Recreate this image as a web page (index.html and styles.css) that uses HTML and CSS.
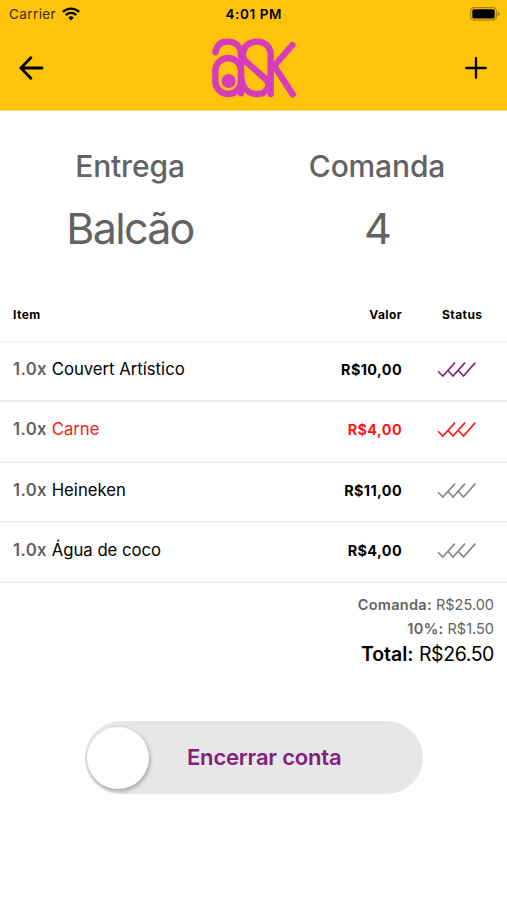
FILE: index.html
```html
<!DOCTYPE html>
<html lang="pt-BR">
<head>
<meta charset="utf-8">
<title>Comanda</title>
<link rel="stylesheet" href="styles.css">
</head>
<body>
<svg width="0" height="0" class="defs">
  <symbol id="checks" viewBox="0 0 40 17"><path d="M1 10.2 5.8 15 18 1.6M10.5 9 16 15 28 1.6M21 9 26.5 15 38.3 1.6" fill="none" stroke="currentColor" stroke-width="1.6"/></symbol>
</svg>
<header class="top">
  <div class="statusbar">
    <div class="carrier"><span>Carrier</span>
      <svg width="18" height="14" viewBox="0 0 18 14" fill="none" stroke="#000" stroke-width="2.3"><path d="M.9 4.9A11.6 11.6 0 0 1 17.1 4.9M3.8 8.1A7.4 7.4 0 0 1 14.2 8.1"/><path d="M6.3 10.7A3.8 3.8 0 0 1 11.7 10.7L9 13.5Z" fill="#000" stroke="none"/></svg>
    </div>
    <div class="clock">4:01 PM</div>
    <div class="battery">
      <svg width="30" height="14" viewBox="0 0 30 14"><rect x=".6" y=".6" width="25.8" height="12.6" rx="3.6" fill="none" stroke="#a98308" stroke-width="1.2"/><rect x="2.3" y="2.3" width="22.4" height="9.2" rx="1.5" fill="#000"/><path d="M27.7 4.6Q30 5.8 29.9 7T27.7 9.3Z" fill="#a98308"/></svg>
    </div>
  </div>
  <nav class="navbar">
    <svg class="back" width="26" height="24" viewBox="0 0 26 24" fill="none" stroke="#000" stroke-width="2.9" stroke-linecap="round" stroke-linejoin="round"><path d="M12.8 1.8 2.9 12 12.8 22.2M3.2 12H24"/></svg>
    <svg class="logo" width="84" height="60" viewBox="36 24 252 180" fill="none" stroke="#d53bbb" stroke-width="19" stroke-linecap="round">
      <path d="M46 67C51 42 65 35 82 35C107 35 123 49 123 76V190"/>
      <rect x="46" y="84" width="77" height="108" rx="38.5"/>
      <circle cx="86" cy="153" r="21" fill="#d53bbb" stroke="none"/>
      <path d="M212 192V74C212 50 195 35 171 35C143 35 127 54 129 77C130 87 135 92 141 98L197 147C215 166 200 192 172 192C145 192 127 174 125 148"/>
      <path d="M277 45 218 113M226 113 278 193"/>
    </svg>
    <svg class="add" width="22" height="22" viewBox="0 0 22 22" stroke="#000" stroke-width="2.3" stroke-linecap="round"><path d="M11 1.2V20.8M1.2 11H20.8"/></svg>
  </nav>
</header>
<main>
  <section class="summary">
    <div class="place"><h2>Entrega</h2><p>Balcão</p></div>
    <div class="tab"><h2>Comanda</h2><p>4</p></div>
  </section>
  <section class="items">
    <div class="row head"><span>Item</span><span class="price">Valor</span><span class="status">Status</span></div>
    <div class="row"><span class="item"><b>1.0x</b> <span>Couvert Artístico</span></span><span class="price">R$10,00</span><svg class="status purple"><use href="#checks"/></svg></div>
    <div class="row late"><span class="item"><b>1.0x</b> <span>Carne</span></span><span class="price">R$4,00</span><svg class="status"><use href="#checks"/></svg></div>
    <div class="row"><span class="item"><b>1.0x</b> <span>Heineken</span></span><span class="price">R$11,00</span><svg class="status"><use href="#checks"/></svg></div>
    <div class="row"><span class="item"><b>1.0x</b> <span>Água de coco</span></span><span class="price">R$4,00</span><svg class="status"><use href="#checks"/></svg></div>
  </section>
  <section class="totals">
    <p><b>Comanda:</b> R$25.00</p>
    <p><b>10%:</b> R$1.50</p>
    <p class="grand"><b>Total:</b> <span>R$26.50</span></p>
  </section>
  <div class="slider"><div class="knob"></div><div class="label">Encerrar conta</div></div>
</main>
</body>
</html>
```
FILE: styles.css
```css
* { box-sizing: border-box; margin: 0; padding: 0; }
body { width: 507px; height: 900px; background: #fff; font-family: Inter, "Liberation Sans", sans-serif; color: #000; overflow: hidden; }
svg { display: block; flex: none; }
.defs { position: absolute; }
b { font-weight: 600; }
.top { height: 111px; background: #ffc40a; border-bottom: 1px solid #f9dc85; }
.statusbar { display: grid; grid-template-columns: 1fr 1fr 1fr; height: 27px; align-items: center; padding: 0 7px 0 9px; font-size: 13.5px; }
.carrier { display: flex; align-items: center; gap: 6px; color: #3a2d05; letter-spacing: .4px; }
.carrier span { width: 47px; }
.carrier { gap: 6px; }
.clock { text-align: center; font-weight: 600; font-size: 13.5px; letter-spacing: .6px; padding-right: 1.5px; }
.battery { display: flex; justify-content: flex-end; }
.navbar { display: flex; justify-content: space-between; align-items: center; height: 82px; padding: 0 20px 0 18px; }
.logo { margin-right: 1px; }
.summary { display: grid; grid-template-columns: 260px 1fr; height: 180px; padding-top: 35px; text-align: center; color: #636363; }
.summary h2 { font-size: 30px; line-height: 40px; font-weight: 500; letter-spacing: -.15px; }
.summary p { font-size: 43px; line-height: 52px; margin-top: 16px; letter-spacing: -1.7px; }
.tab { padding-right: 13px; }
.row { display: grid; grid-template-columns: 1fr 110px 92px; height: 60.25px; align-items: center; padding: 0 13px; padding-bottom: 5px; border-bottom: 2px solid #f0f0f0; font-size: 16.7px; }
.row.head { height: 51px; font-size: 12px; font-weight: 700; letter-spacing: .45px; padding-bottom: 3px; border-bottom-width: 1px; }
.item { padding-top: 1px; }
.row b { color: #636363; letter-spacing: .4px; }
.price { text-align: right; font-size: 14.4px; font-weight: 700; letter-spacing: .4px; padding-top: 2px; }
.head .price { font-size: 12px; letter-spacing: .4px; padding-top: 0; }
span.status { text-align: right; padding-right: 11.5px; }
svg.status { width: 40px; height: 17px; margin: 2px 0 0 35px; color: #858585; }
svg.purple { color: #83217c; }
.late { color: #fa1919; }
.late svg.status { color: #fa1919; }
.totals { padding: 10px 13px 0; text-align: right; font-size: 14.5px; line-height: 23.5px; color: #636363; }
.totals b { letter-spacing: .3px; }
.totals .grand { color: #000; font-size: 19.5px; line-height: 29px; }
.grand span { letter-spacing: -.4px; }
.totals .grand b { letter-spacing: -.05px; }
.slider { display: flex; align-items: center; width: 338px; height: 73px; margin: 52px 0 0 85px; padding-left: 2px; border-radius: 37px; background: #e7e7e7; }
.knob { width: 62px; height: 62px; border-radius: 50%; background: #fff; box-shadow: 1px 2px 4px rgba(0,0,0,.32); }
.label { margin-left: 38px; padding-bottom: 2px; font-size: 22px; font-weight: 600; letter-spacing: -.2px; color: #83217c; }
```
